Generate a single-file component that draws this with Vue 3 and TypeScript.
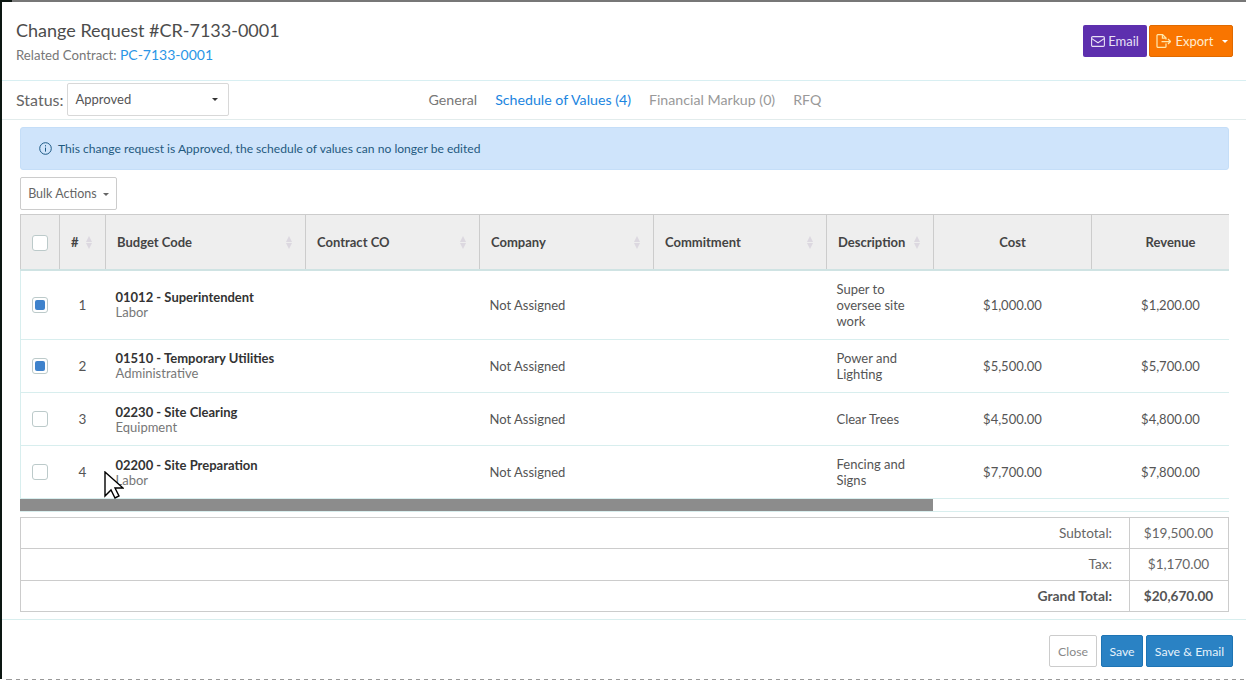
<script setup lang="ts">
interface Row { n: number; code: string; type: string; desc: string[]; cost: string; rev: string; checked: boolean }
const rows: Row[] = [
  { n: 1, code: '01012 - Superintendent', type: 'Labor', desc: ['Super to', 'oversee site', 'work'], cost: '$1,000.00', rev: '$1,200.00', checked: true },
  { n: 2, code: '01510 - Temporary Utilities', type: 'Administrative', desc: ['Power and', 'Lighting'], cost: '$5,500.00', rev: '$5,700.00', checked: true },
  { n: 3, code: '02230 - Site Clearing', type: 'Equipment', desc: ['Clear Trees'], cost: '$4,500.00', rev: '$4,800.00', checked: false },
  { n: 4, code: '02200 - Site Preparation', type: 'Labor', desc: ['Fencing and', 'Signs'], cost: '$7,700.00', rev: '$7,800.00', checked: false },
]
const sortCols = [
  { label: 'Budget Code', cls: 'c-code' },
  { label: 'Contract CO', cls: 'c-co' },
  { label: 'Company', cls: 'c-company' },
  { label: 'Commitment', cls: 'c-commit' },
]
</script>

<template>
  <div class="screen">
    <div class="top-edge"></div>
    <div class="modal">
      <header class="head">
        <div>
          <h1 class="title">Change Request #CR-7133-0001</h1>
          <div class="related">Related Contract: <a class="link">PC-7133-0001</a></div>
        </div>
        <div class="head-actions">
          <button class="btn purple">
            <svg width="14" height="11" viewBox="0 0 14 11" fill="none" stroke="currentColor" stroke-width="1.1"><rect x=".6" y=".6" width="12.8" height="9.8" rx="1.2"/><path d="M.8 2.6 7 6.8l6.2-4.2"/></svg>
            Email
          </button>
          <button class="btn orange">
            <svg width="15" height="14" viewBox="0 0 15 14" fill="none" stroke="#ffe6a8" stroke-width="1.25"><path d="M10 9.6v2.8a1 1 0 0 1-1 1H2a1 1 0 0 1-1-1V1.6a1 1 0 0 1 1-1h4.6L10 4v1.6M6.4.8V4.2H10M5.5 7.5h9M12 5l2.5 2.5L12 10"/></svg>
            Export <span class="caret white"></span>
          </button>
        </div>
      </header>

      <div class="toolbar">
        <div class="status">
          <span class="status-label">Status:</span>
          <div class="select"><span>Approved</span><span class="caret dark"></span></div>
        </div>
        <nav class="tabs">
          <span class="tab first">General</span>
          <span class="tab active">Schedule of Values (4)</span>
          <span class="tab muted">Financial Markup (0)</span>
          <span class="tab muted">RFQ</span>
        </nav>
      </div>

      <main class="body">
        <div class="alert">
          <svg width="13" height="13" viewBox="0 0 13 13" fill="none" stroke="#1d5a85" stroke-width="1"><circle cx="6.5" cy="6.5" r="5.8"/><path d="M6.5 5.6v4M6.5 3.2v1.2"/></svg>
          <span>This change request is Approved, the schedule of values can no longer be edited</span>
        </div>

        <button class="bulk">Bulk Actions <span class="caret gray"></span></button>

        <div class="table-wrap">
          <table class="grid">
            <thead>
              <tr>
                <th class="c-check"><span class="box"></span></th>
                <th class="c-num"><div class="th-in"><span>#</span><span class="sort small"></span></div></th>
                <th v-for="c in sortCols" :key="c.label" :class="c.cls">
                  <div class="th-in"><span>{{ c.label }}</span><span class="sort"></span></div>
                </th>
                <th class="c-desc"><div class="th-in"><span>Description</span><span class="sort"></span></div></th>
                <th class="c-money">Cost</th>
                <th class="c-money">Revenue</th>
              </tr>
            </thead>
            <tbody>
              <tr v-for="r in rows" :key="r.n" :class="'row-' + r.n">
                <td class="center"><span class="box" :class="{ on: r.checked }"></span></td>
                <td class="center num">{{ r.n }}</td>
                <td class="code"><strong>{{ r.code }}</strong><br /><span class="type">{{ r.type }}</span></td>
                <td></td>
                <td class="plain">Not Assigned</td>
                <td></td>
                <td class="plain"><template v-for="(d, i) in r.desc" :key="d"><br v-if="i" />{{ d }}</template></td>
                <td class="center plain">{{ r.cost }}</td>
                <td class="center plain">{{ r.rev }}</td>
              </tr>
            </tbody>
          </table>
          <div class="scroll"><div class="thumb"></div></div>
        </div>

        <table class="totals">
          <tbody>
            <tr class="first-row"><td class="t-label">Subtotal:</td><td class="t-val">$19,500.00</td></tr>
            <tr><td class="t-label">Tax:</td><td class="t-val">$1,170.00</td></tr>
            <tr class="grand"><td class="t-label">Grand Total:</td><td class="t-val">$20,670.00</td></tr>
          </tbody>
        </table>
      </main>

      <footer class="foot">
        <button class="btn close">Close</button>
        <button class="btn blue save">Save</button>
        <button class="btn blue save-email">Save &amp; Email</button>
      </footer>
    </div>
    <div class="dash"></div>

    <svg class="cursor" width="20" height="28" viewBox="0 0 20 28">
      <path d="M1 1v24l6-6 4 8 4-2-4-8h8z" fill="#fff" stroke="#000" stroke-width="1.4" stroke-linejoin="miter"/>
    </svg>
  </div>
</template>

<style>
html, body { margin: 0; background: #fff; }
</style>

<style scoped>
.screen {
  position: relative;
  width: 1246px;
  height: 680px;
  overflow: hidden;
  background: #fff;
  font-family: Lato, "Liberation Sans", sans-serif;
  color: #555;
  font-size: 14px;
}
.top-edge {
  height: 2px;
  background: linear-gradient(to right, #0c1712 12px, #777 12px);
}
.dash {
  height: 1px;
  background: repeating-linear-gradient(to right, #999 0 4px, transparent 4px 8px);
  background-position: 4px 0;
  margin-left: 4px;
}
.modal {
  box-sizing: border-box;
  height: 677px;
  background: #fff;
  border-left: 2px solid #0c1712;
  display: flex;
  flex-direction: column;
}
.head {
  box-sizing: border-box;
  height: 79px;
  border-bottom: 1px solid #d8eff2;
  padding: 17px 13px 0 14px;
  display: flex;
  justify-content: space-between;
}
.title { margin: 0; font-size: 18px; font-weight: 400; line-height: 22px; color: #4c4c4c; }
.related { margin-top: 4px; font-size: 13.2px; line-height: 20px; color: #777; }
.link { color: #2a96e6; font-size: 14px; }
.head-actions { display: flex; gap: 2px; padding-top: 6px; align-self: flex-start; }
.btn {
  box-sizing: border-box;
  height: 32px;
  border-radius: 2px;
  border: 1px solid transparent;
  font: 13px Lato, "Liberation Sans", sans-serif;
  display: inline-flex;
  align-items: center;
  justify-content: center;
  padding: 0;
  gap: 3px;
}
.purple { width: 64px; background: #5d2fae; color: #e8e0f5; }
.orange { width: 84px; background: #f97500; border-color: #e06a00; color: #ffeccf; gap: 4px; padding-left: 2px; }
.caret { display: inline-block; width: 0; height: 0; border-left: 3px solid transparent; border-right: 3px solid transparent; border-top: 3px solid; }
.caret.white { color: #fff; margin-left: 4px; }
.caret.dark { color: #333; }
.caret.gray { color: #666; margin-left: 3px; vertical-align: 2px; }

.toolbar {
  box-sizing: border-box;
  height: 39px;
  border-bottom: 1px solid #e2ecec;
  padding-left: 14px;
  display: flex;
  align-items: flex-start;
}
.status { display: flex; align-items: center; gap: 3px; padding-top: 2px; }
.status-label { font-size: 16px; color: #666; }
.select {
  box-sizing: border-box;
  width: 162px;
  height: 33px;
  border: 1px solid #d8d8d8;
  border-radius: 2px;
  padding: 0 10px 0 8px;
  display: flex;
  align-items: center;
  justify-content: space-between;
  font-size: 13px;
  color: #555;
}
.select span:first-child { position: relative; top: -1px; }
.tabs { display: flex; margin-left: 200px; padding-top: 10px; font-size: 14.2px; line-height: 18px; }
.tab { margin-right: 18px; color: #777; white-space: nowrap; }
.tab.active { color: #1b85e0; }
.tab.muted { color: #999; }

.body { flex: 1; padding: 7px 17px 0 18px; }
.alert {
  box-sizing: border-box;
  height: 43px;
  background: #cfe4fb;
  border: 1px solid #c5def8;
  border-radius: 3px;
  padding-left: 18px;
  display: flex;
  align-items: center;
  gap: 6px;
  font-size: 12.1px;
  color: #1f5a80;
}
.bulk {
  box-sizing: border-box;
  display: block;
  width: 97px;
  height: 33px;
  margin-top: 7px;
  background: #fff;
  border: 1px solid #ccc;
  border-radius: 2px;
  font: 12.5px Lato, "Liberation Sans", sans-serif;
  color: #666;
  padding: 0;
}
.table-wrap {
  margin-top: 4px;
  width: 1209px;
  overflow: hidden;
  position: relative;
}
.grid {
  table-layout: fixed;
  width: 1229px;
  border-collapse: collapse;
}
.grid th {
  height: 55px;
  box-sizing: border-box;
  background: #eee;
  border-top: 1px solid #ccc;
  border-bottom: 2px solid #cfe3e3;
  border-right: 1px solid #ccc;
  border-left: 1px solid #ccc;
  font-size: 13px;
  font-weight: 700;
  color: #444;
  text-align: left;
  padding: 0 0 0 11px;
}
.c-check { width: 39px; padding: 0 !important; text-align: center !important; }
.c-num { width: 46px; }
.c-code { width: 200px; }
.c-co { width: 174px; }
.c-company { width: 174px; }
.c-commit { width: 173px; }
.c-desc { width: 107px; }
.c-money { width: 158px; text-align: center !important; padding: 0 !important; }
.th-in { display: flex; justify-content: space-between; align-items: center; padding-right: 13px; }
.sort {
  display: inline-block;
  width: 0;
  height: 0;
  position: relative;
  top: -3px;
  border-left: 3.5px solid transparent;
  border-right: 3.5px solid transparent;
  border-bottom: 6px solid #dcd8e0;
}
.sort::after {
  content: "";
  position: absolute;
  left: -3.5px;
  top: 7px;
  width: 0;
  height: 0;
  border-left: 3.5px solid transparent;
  border-right: 3.5px solid transparent;
  border-top: 6px solid #dcd8e0;
}
.grid td {
  border-bottom: 1px solid #d8eeee;
  padding: 0 0 0 10px;
  font-size: 13px;
  line-height: 16px;
  color: #555;
  vertical-align: middle;
}
.grid td:first-child { border-left: 1px solid #d8eeee; }
.row-1 td { height: 68px; }
.row-2 td, .row-3 td, .row-4 td { height: 52px; }
.grid td.center { text-align: center; padding: 0; }
.grid td.num { font-size: 13.5px; color: #555; }
.code { line-height: 15px !important; }
.row-3 .code > *, .row-4 .code > * { position: relative; top: 1px; }
.code strong { color: #333; font-size: 13px; }
.type { color: #777; }
.plain { color: #555; }
.box {
  display: inline-block;
  box-sizing: border-box;
  width: 16px;
  height: 16px;
  border: 1px solid #bccaca;
  border-radius: 3px;
  background: #fff;
  vertical-align: middle;
  position: relative;
}
.box.on::after {
  content: "";
  position: absolute;
  inset: 2px;
  border-radius: 2px;
  background: #3f82cc;
}
.scroll { height: 12px; border-bottom: 1px solid #d8eeee; box-sizing: content-box; }
.thumb { width: 913px; height: 12px; background: #8c8c8c; }

.totals {
  width: 1209px;
  margin-top: 5px;
  border-collapse: collapse;
  font-size: 13.6px;
}
.totals td { border: 1px solid #ccc; height: 32px; padding: 0; box-sizing: border-box; }
.first-row td { height: 31px; }
.t-label { text-align: right; padding-right: 17px !important; color: #666; }
.t-val { width: 99px; text-align: center; color: #666; padding-right: 1px !important; }
.grand td { font-weight: 700; color: #555; height: 31px; }
.grand .t-label { font-size: 13.9px; }

.foot {
  box-sizing: border-box;
  height: 60px;
  border-top: 1px solid #d8eeee;
  padding: 15px 13px 0 0;
  display: flex;
  justify-content: flex-end;
  gap: 4px;
}
.foot .btn { font-size: 12.3px; }
.close { width: 48px; background: #fff; border-color: #ccc; color: #888; }
.blue { background: #2a82c4; border-color: #1e74b4; color: #e6f2fb; }
.save { width: 42px; }
.save-email { width: 87px; margin-left: -1px; }

.cursor { position: absolute; left: 104px; top: 471px; }
</style>
